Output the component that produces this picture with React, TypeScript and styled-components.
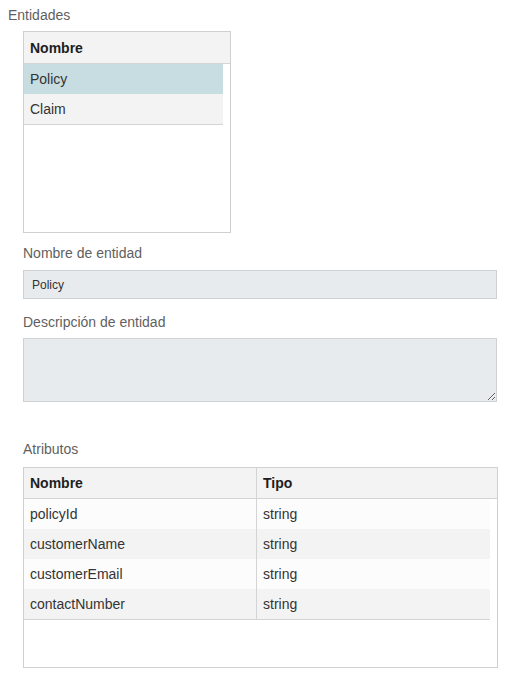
import React from "react";
import styled, { createGlobalStyle } from "styled-components";

const Global = createGlobalStyle`
  html, body { margin: 0; padding: 0; background: #ffffff; }
  body { font-family: "Liberation Sans", Arial, sans-serif; }
  * { box-sizing: border-box; }
`;

const Page = styled.div`
  width: 522px;
  padding: 7px 8px 20px 8px;
  display: flex;
  flex-direction: column;
`;

const Label = styled.div<{ $indent?: boolean; $top?: number }>`
  font-size: 14px;
  line-height: 16px;
  color: #5f5f5f;
  padding-left: ${(p) => (p.$indent ? 15 : 0)}px;
  margin-top: ${(p) => p.$top ?? 0}px;
`;

const Section = styled.div<{ $top: number }>`
  padding-left: 15px;
  margin-top: ${(p) => p.$top}px;
  display: flex;
  flex-direction: column;
`;

const Grid = styled.div<{ $width: number; $height: number }>`
  width: ${(p) => p.$width}px;
  height: ${(p) => p.$height}px;
  border: 1px solid #d0d0d0;
  background: #ffffff;
  display: flex;
  flex-direction: column;
  overflow: hidden;
`;

const HeaderRow = styled.div<{ $cols: number; $height: number }>`
  display: grid;
  grid-template-columns: repeat(${(p) => p.$cols}, 1fr);
  height: ${(p) => p.$height}px;
  padding-right: 7px;
  background: #f3f3f3;
  border-bottom: 1px solid #d4d4d4;
`;

const HeaderCell = styled.div<{ $divider?: boolean }>`
  display: flex;
  align-items: center;
  padding-left: 6px;
  font-size: 14px;
  font-weight: bold;
  color: #1e1e1e;
  border-right: ${(p) => (p.$divider ? "1px solid #d4d4d4" : "none")};
`;

const Body = styled.div`
  padding-right: 7px;
  display: flex;
  flex-direction: column;
`;

const Rows = styled.div`
  border-bottom: 1px solid #d4d4d4;
`;

const Row = styled.div<{ $cols: number; $even: boolean; $selected?: boolean }>`
  display: grid;
  grid-template-columns: repeat(${(p) => p.$cols}, 1fr);
  height: 30px;
  background: ${(p) => (p.$selected ? "#c8dde1" : p.$even ? "#f3f3f3" : "#fcfcfc")};
`;

const Cell = styled.div<{ $divider?: boolean }>`
  display: flex;
  align-items: center;
  padding-left: 6px;
  font-size: 14px;
  color: #333333;
  white-space: nowrap;
  border-right: ${(p) => (p.$divider ? "1px solid #d4d4d4" : "none")};
`;

const Input = styled.div`
  width: 474px;
  height: 29px;
  background: #e8ebee;
  border: 1px solid #cfd3d6;
  padding-left: 8px;
  display: flex;
  align-items: center;
  font-size: 12px;
  color: #333333;
`;

const TextArea = styled.textarea`
  display: block;
  width: 474px;
  height: 64px;
  margin: 0;
  background: #e8ebee;
  border: 1px solid #cfd3d6;
  border-radius: 0;
  padding: 6px 8px;
  font-family: "Liberation Sans", Arial, sans-serif;
  font-size: 12px;
  color: #333333;
  outline: none;
`;

const entities = ["Policy", "Claim"];
const attributes = [
  ["policyId", "string"],
  ["customerName", "string"],
  ["customerEmail", "string"],
  ["contactNumber", "string"],
];

export default function App() {
  return (
    <>
      <Global />
      <Page>
        <Label>Entidades</Label>
        <Section $top={8}>
          <Grid $width={208} $height={202}>
            <HeaderRow $cols={1} $height={32}>
              <HeaderCell>Nombre</HeaderCell>
            </HeaderRow>
            <Body>
              <Rows>
                {entities.map((e, i) => (
                  <Row key={e} $cols={1} $even={i % 2 === 1} $selected={i === 0}>
                    <Cell>{e}</Cell>
                  </Row>
                ))}
              </Rows>
            </Body>
          </Grid>
        </Section>
        <Label $indent $top={12}>Nombre de entidad</Label>
        <Section $top={9}>
          <Input>Policy</Input>
        </Section>
        <Label $indent $top={15}>Descripción de entidad</Label>
        <Section $top={8}>
          <TextArea readOnly defaultValue="" />
        </Section>
        <Label $indent $top={39}>Atributos</Label>
        <Section $top={10}>
          <Grid $width={475} $height={201}>
            <HeaderRow $cols={2} $height={31}>
              <HeaderCell $divider>Nombre</HeaderCell>
              <HeaderCell>Tipo</HeaderCell>
            </HeaderRow>
            <Body>
              <Rows>
                {attributes.map(([n, t], i) => (
                  <Row key={n} $cols={2} $even={i % 2 === 1}>
                    <Cell $divider>{n}</Cell>
                    <Cell>{t}</Cell>
                  </Row>
                ))}
              </Rows>
            </Body>
          </Grid>
        </Section>
      </Page>
    </>
  );
}
